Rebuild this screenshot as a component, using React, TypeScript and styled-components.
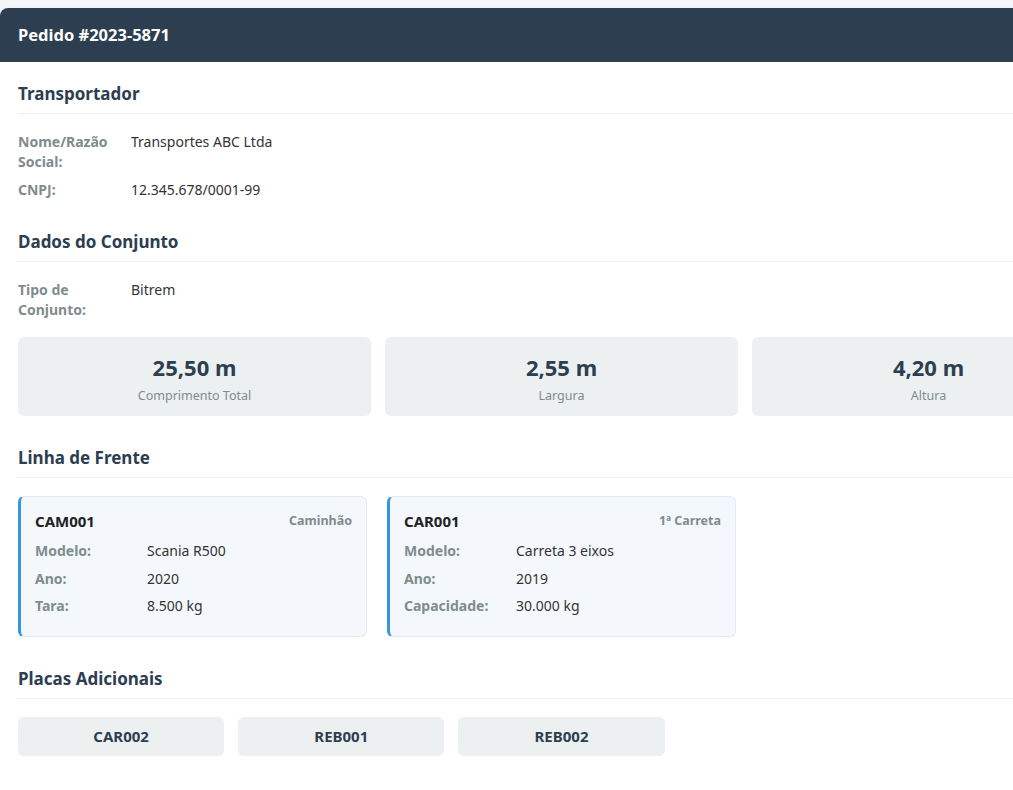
import React from "react";
import styled, { createGlobalStyle } from "styled-components";

const GlobalStyle = createGlobalStyle`
  html, body {
    margin: 0;
    padding: 0;
  }
  body {
    background: #f4f5f8;
    padding-top: 8px;
    font-family: "Noto Sans", "Open Sans", sans-serif;
    color: #333;
    font-size: 14px;
  }
`;

const Card = styled.div`
  width: 1123px;
  background: #fff;
  border-radius: 8px;
  overflow: hidden;
  box-shadow: 0 2px 6px rgba(0, 0, 0, 0.06);
`;

const Header = styled.div`
  background: #2c3e50;
  color: #fff;
  padding: 16px 18px;
  font-size: 16.5px;
  font-weight: 700;
  line-height: 22px;
`;

const Body = styled.div`
  padding: 19px 18px 20px;
`;

const Section = styled.section`
  margin-bottom: 29px;
`;

const SectionTitle = styled.h3`
  margin: 0 0 18px;
  padding-bottom: 7px;
  border-bottom: 1px solid #ecedef;
  font-size: 17px;
  line-height: 25px;
  font-weight: 700;
  color: #2c3e50;
`;

const InfoList = styled.div`
  display: flex;
  flex-direction: column;
  gap: 8px;
`;

const InfoRow = styled.div`
  display: grid;
  grid-template-columns: 113px 1fr;
  line-height: 20px;
`;

const Label = styled.span`
  font-weight: 700;
  color: #7f8c8d;
  padding-right: 10px;
`;

const Value = styled.span`
  color: #333;
`;

const StatGrid = styled.div`
  display: grid;
  grid-template-columns: repeat(3, 1fr);
  gap: 14px;
  margin-top: 17px;
`;

const Stat = styled.div`
  background: #ecf0f1;
  border-radius: 6px;
  padding: 15px 10px 11px;
  text-align: center;
`;

const StatValue = styled.div`
  font-size: 22px;
  font-weight: 700;
  color: #2c3e50;
  line-height: 30px;
  margin-bottom: 5px;
`;

const StatLabel = styled.div`
  font-size: 12.5px;
  color: #7f8c8d;
  line-height: 18px;
`;

const VehicleGrid = styled.div`
  display: grid;
  grid-template-columns: repeat(auto-fill, minmax(300px, 1fr));
  gap: 20px;
`;

const Vehicle = styled.div`
  background: #f4f8fc;
  border: 1px solid #e2eaf2;
  border-left: 3px solid #3498db;
  border-radius: 6px;
  padding: 13px 14px 20px;
`;

const VehicleHead = styled.div`
  display: flex;
  justify-content: space-between;
  align-items: center;
  line-height: 22px;
  margin-bottom: 9px;
`;

const Plate = styled.span`
  font-size: 15px;
  font-weight: 700;
  color: #222;
`;

const Kind = styled.span`
  font-size: 12.5px;
  font-weight: 700;
  color: #7f8c8d;
`;

const VehicleRows = styled.div`
  display: flex;
  flex-direction: column;
  gap: 7.5px;
`;

const VehicleRow = styled.div`
  display: grid;
  grid-template-columns: 112px 1fr;
  line-height: 20px;
`;

const ChipGrid = styled.div`
  display: grid;
  grid-template-columns: repeat(auto-fill, minmax(200px, 1fr));
  gap: 14px;
`;

const Chip = styled.div`
  background: #ecf0f1;
  border-radius: 6px;
  padding: 10px;
  line-height: 19px;
  text-align: center;
  font-size: 15px;
  font-weight: 700;
  color: #2c3e50;
`;

const vehicles = [
  {
    plate: "CAM001",
    kind: "Caminhão",
    rows: [
      ["Modelo:", "Scania R500"],
      ["Ano:", "2020"],
      ["Tara:", "8.500 kg"],
    ],
  },
  {
    plate: "CAR001",
    kind: "1ª Carreta",
    rows: [
      ["Modelo:", "Carreta 3 eixos"],
      ["Ano:", "2019"],
      ["Capacidade:", "30.000 kg"],
    ],
  },
];

export default function App() {
  return (
    <>
      <GlobalStyle />
      <Card>
        <Header>Pedido #2023-5871</Header>
        <Body>
          <Section>
            <SectionTitle>Transportador</SectionTitle>
            <InfoList>
              <InfoRow>
                <Label>Nome/Razão Social:</Label>
                <Value>Transportes ABC Ltda</Value>
              </InfoRow>
              <InfoRow>
                <Label>CNPJ:</Label>
                <Value>12.345.678/0001-99</Value>
              </InfoRow>
            </InfoList>
          </Section>

          <Section>
            <SectionTitle>Dados do Conjunto</SectionTitle>
            <InfoList>
              <InfoRow>
                <Label>Tipo de Conjunto:</Label>
                <Value>Bitrem</Value>
              </InfoRow>
            </InfoList>
            <StatGrid>
              <Stat>
                <StatValue>25,50 m</StatValue>
                <StatLabel>Comprimento Total</StatLabel>
              </Stat>
              <Stat>
                <StatValue>2,55 m</StatValue>
                <StatLabel>Largura</StatLabel>
              </Stat>
              <Stat>
                <StatValue>4,20 m</StatValue>
                <StatLabel>Altura</StatLabel>
              </Stat>
            </StatGrid>
          </Section>

          <Section>
            <SectionTitle>Linha de Frente</SectionTitle>
            <VehicleGrid>
              {vehicles.map((v) => (
                <Vehicle key={v.plate}>
                  <VehicleHead>
                    <Plate>{v.plate}</Plate>
                    <Kind>{v.kind}</Kind>
                  </VehicleHead>
                  <VehicleRows>
                    {v.rows.map(([l, val]) => (
                      <VehicleRow key={l}>
                        <Label>{l}</Label>
                        <Value>{val}</Value>
                      </VehicleRow>
                    ))}
                  </VehicleRows>
                </Vehicle>
              ))}
            </VehicleGrid>
          </Section>

          <Section>
            <SectionTitle>Placas Adicionais</SectionTitle>
            <ChipGrid>
              <Chip>CAR002</Chip>
              <Chip>REB001</Chip>
              <Chip>REB002</Chip>
            </ChipGrid>
          </Section>

          <Section>
            <SectionTitle>Detalhes da Carga</SectionTitle>
          </Section>
        </Body>
      </Card>
    </>
  );
}
